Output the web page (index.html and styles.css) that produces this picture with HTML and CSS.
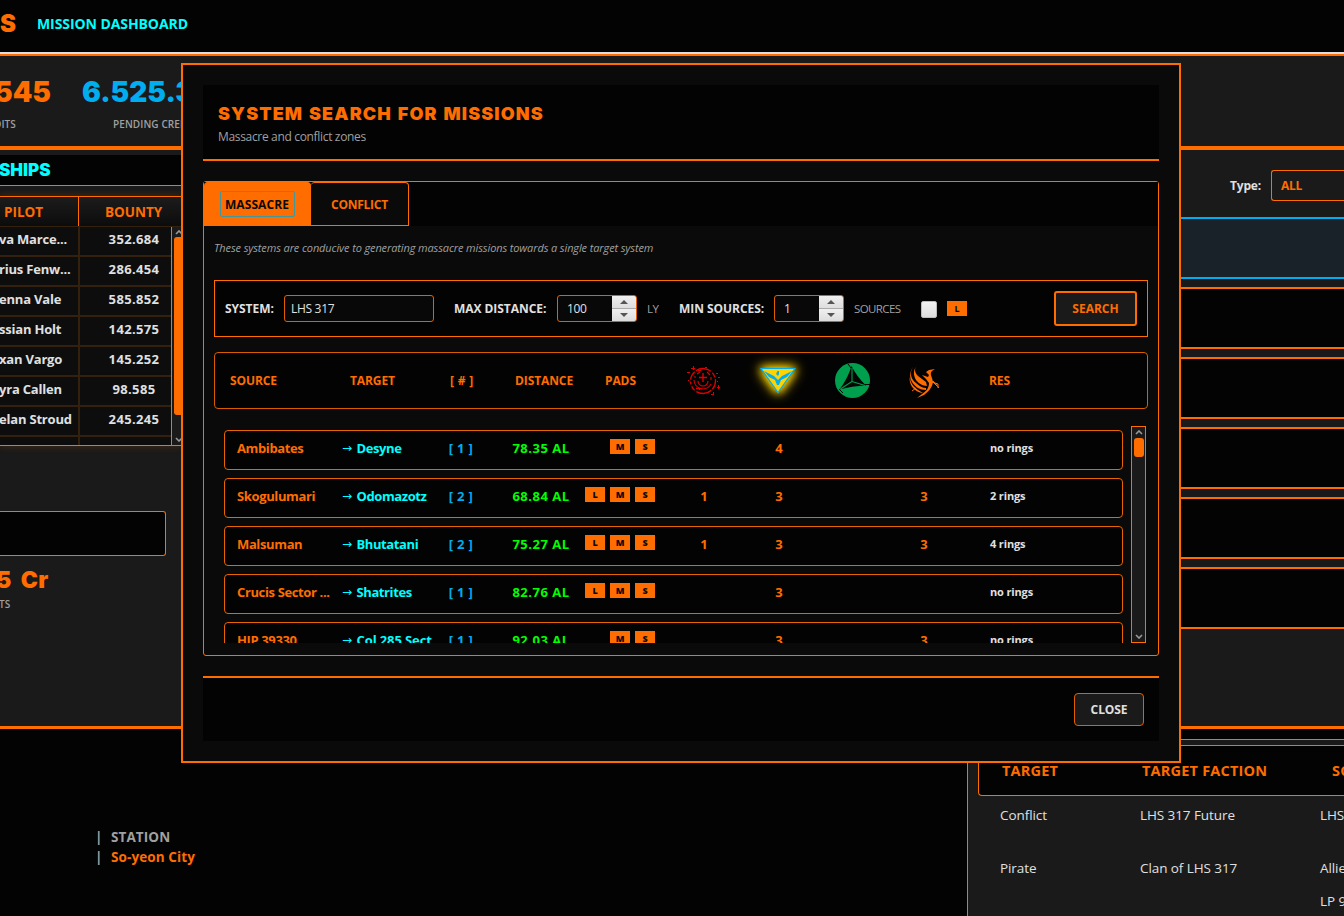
FILE: index.html
```html
<!DOCTYPE html>
<html lang="en">
<head>
<meta charset="utf-8">
<title>Mission Dashboard</title>
<link rel="stylesheet" href="styles.css">
</head>
<body>
<div class="app">
  <header class="topbar"><span class="brand">S</span><span class="page-name">MISSION DASHBOARD</span></header>
  <section class="stats">
    <div class="stat stat-a"><b class="big orange">545</b><span class="cap">DITS</span></div>
    <div class="stat stat-b"><b class="big blue">6.525.325</b><span class="cap">PENDING CREDITS</span></div>
  </section>
  <main class="middle">
    <section class="ships">
      <h2 class="ships-title">SHIPS</h2>
      <div class="ships-table">
        <div class="ships-head"><span class="c1">PILOT</span><span class="c2">BOUNTY</span></div>
        <div class="ships-body">
          <div class="ships-rows">
            <div class="ship"><span class="c1">va Marce...</span><span class="c2">352.684</span></div>
            <div class="ship"><span class="c1">rius Fenw...</span><span class="c2">286.454</span></div>
            <div class="ship"><span class="c1">enna Vale</span><span class="c2">585.852</span></div>
            <div class="ship"><span class="c1">ssian Holt</span><span class="c2">142.575</span></div>
            <div class="ship"><span class="c1">xan Vargo</span><span class="c2">145.252</span></div>
            <div class="ship"><span class="c1">yra Callen</span><span class="c2">98.585</span></div>
            <div class="ship"><span class="c1">elan Stroud</span><span class="c2">245.245</span></div>
            <div class="ship"><span class="c1"></span><span class="c2"></span></div>
          </div>
          <div class="ships-scroll">
            <svg class="chev" viewBox="0 0 8 5"><path d="M1 4 4 1 7 4"/></svg>
            <i class="ships-thumb"></i>
            <svg class="chev" viewBox="0 0 8 5"><path d="M1 1 4 4 7 1"/></svg>
          </div>
        </div>
      </div>
      <div class="blank-box"></div>
      <b class="credit">5 Cr</b>
      <span class="credit-cap">TS</span>
    </section>
    <section class="missions">
      <div class="type-row"><label>Type:</label><div class="select">ALL</div></div>
      <div class="card selected"></div>
      <div class="card"></div><div class="card"></div><div class="card"></div><div class="card"></div><div class="card"></div>
    </section>
  </main>
  <section class="bottom">
    <div class="station">
      <div class="st-line"><i>|</i><span class="gray">STATION</span></div>
      <div class="st-line"><i>|</i><span class="orange">So-yeon City</span></div>
    </div>
    <div class="factions">
      <div class="f-head"><span>TARGET</span><span>TARGET FACTION</span><span>SOURCE</span></div>
      <div class="f-row"><span>Conflict</span><span>LHS 317 Future</span><span>LHS 317</span></div>
      <div class="f-row"><span>Pirate</span><span>Clan of LHS 317</span><div class="f-src"><span>Allied</span><span>LP 91</span></div></div>
    </div>
  </section>
</div>

<div class="modal">
  <div class="m-head"><h1>SYSTEM SEARCH FOR MISSIONS</h1><p>Massacre and conflict zones</p></div>
  <div class="tabs-panel">
    <div class="tabs">
      <div class="tab active"><span class="focus">MASSACRE</span></div>
      <div class="tab"><span>CONFLICT</span></div>
    </div>
    <p class="desc">These systems are conducive to generating massacre missions towards a single target system</p>
    <div class="filters">
      <label class="l-sys">SYSTEM:</label><div class="input sys">LHS 317</div>
      <label class="l-max">MAX DISTANCE:</label>
      <div class="input spin s1"><span>100</span><div class="arrows"><i><svg viewBox="0 0 8 4"><path d="M0 4 4 0 8 4z"/></svg></i><i><svg viewBox="0 0 8 4"><path d="M0 0 4 4 8 0z"/></svg></i></div></div>
      <span class="unit u-ly">LY</span>
      <label class="l-min">MIN SOURCES:</label>
      <div class="input spin s2"><span>1</span><div class="arrows"><i><svg viewBox="0 0 8 4"><path d="M0 4 4 0 8 4z"/></svg></i><i><svg viewBox="0 0 8 4"><path d="M0 0 4 4 8 0z"/></svg></i></div></div>
      <span class="unit u-src">SOURCES</span>
      <i class="check"></i><b class="pad">L</b>
      <div class="btn-search">SEARCH</div>
    </div>
    <div class="cols">
      <span>SOURCE</span><span>TARGET</span><span class="h-num">[ # ]</span><span>DISTANCE</span><span>PADS</span>
      <div class="ico"><svg width="36" height="36" viewBox="0 0 36 36" fill="none" stroke="#e00000">
        <circle cx="18" cy="18" r="12.500" stroke-width="1.3" stroke-dasharray="9 1.5 16 2 5 2 3 2"/>
        <path stroke-width="1.1" d="M9 17a9 9 0 0 0 17 4M13 18a5 5 0 0 0 10 0M12 11l3-2M22 9l3 3M26 14v3M10 13v2"/>
        <path stroke-width="1.4" d="M18 10v9M14 14.500h8"/>
        <path shape-rendering="crispEdges" d="M8 3v4M6 5h4M13 7h3M20 4h2M2 9h3M3 17h1M11 25h3v2M31 10h2M33 14h2M32 24h3M33 22v4M28 29v3M26 31h2M32 18h1"/>
      </svg></div>
      <div class="ico"><svg class="tri" width="44" height="44" viewBox="0 0 44 44">
        <path fill="#ffd400" d="M5 9h34L22 34z"/>
        <path fill="none" stroke="#00aeef" stroke-width="1.2" d="M5 9.500h34L22 33.500z"/>
        <path fill="#00aeef" d="M8 12 18 17 22 21 26 17 36 12 31 18 25 21 23 26h-2l-2-5-6-3zM21.500 12h1.500v3l-1 2-2-2z"/>
      </svg></div>
      <div class="ico"><svg width="36" height="36" viewBox="0 0 36 36">
        <circle cx="18.500" cy="17.500" r="17.500" fill="#009f4d"/>
        <path fill="#050505" d="M17.500 3Q23 14 32 22.500Q18 23 5.500 26.500Q14 15 17.500 3z"/>
        <path fill="none" stroke="#050505" d="M14 1l3 4M29 21.500h7M5 26l4 4"/>
        <path fill="none" stroke="#009f4d" stroke-width="1.1" d="M18 5v13.500L6.500 26M18 18.500l13 4"/>
      </svg></div>
      <div class="ico"><svg width="32" height="36" viewBox="-1 0 32 36" fill="#ff6d00">
        <path d="M9 1C5 5 5 9 9 13l8 6 1 4c-4 0-9-3-11-6C4 12 4 6 9 1zM4 4c-4 6-2 12 3 16 3 3 7 5 10 5v2C11 27 6 24 3 19 0 14 1 8 4 4zM1 14c0 6 4 10 8 13l5 3c-5 0-10-4-12-8-1-3-2-5-1-8zM17 9l3-2 6-1-3 2c-2 2-1 4 0 7l1 4c-1 6-5 10-9 13l-7 3 5-4c5-3 7-7 7-11l-3-4-4-4 6 2 1-2z"/>
        <path fill="none" stroke="#ff6d00" d="M7 25l-4 3M23 18l5 5M23 19l6 2v4M24 18l6 7"/>
      </svg></div>
      <span></span><span>RES</span>
    </div>
    <div class="list">
      <div class="rows">
        <div class="row"><span class="src">Ambibates</span><span class="tgt"><em>→</em>Desyne</span><span class="num">[ 1 ]</span><span class="dist">78.35 AL</span><div class="pads"><b class="pad">M</b><b class="pad">S</b></div><span class="cnt"></span><span class="cnt">4</span><span class="cnt"></span><span class="cnt"></span><span></span><span class="res">no rings</span></div>
        <div class="row"><span class="src">Skogulumari</span><span class="tgt"><em>→</em>Odomazotz</span><span class="num">[ 2 ]</span><span class="dist">68.84 AL</span><div class="pads"><b class="pad">L</b><b class="pad">M</b><b class="pad">S</b></div><span class="cnt">1</span><span class="cnt">3</span><span class="cnt"></span><span class="cnt">3</span><span></span><span class="res">2 rings</span></div>
        <div class="row"><span class="src">Malsuman</span><span class="tgt"><em>→</em>Bhutatani</span><span class="num">[ 2 ]</span><span class="dist">75.27 AL</span><div class="pads"><b class="pad">L</b><b class="pad">M</b><b class="pad">S</b></div><span class="cnt">1</span><span class="cnt">3</span><span class="cnt"></span><span class="cnt">3</span><span></span><span class="res">4 rings</span></div>
        <div class="row"><span class="src">Crucis Sector ...</span><span class="tgt"><em>→</em>Shatrites</span><span class="num">[ 1 ]</span><span class="dist">82.76 AL</span><div class="pads"><b class="pad">L</b><b class="pad">M</b><b class="pad">S</b></div><span class="cnt"></span><span class="cnt">3</span><span class="cnt"></span><span class="cnt"></span><span></span><span class="res">no rings</span></div>
        <div class="row"><span class="src">HIP 39330</span><span class="tgt wide"><em>→</em>Col 285 Sect</span><span class="num">[ 1 ]</span><span class="dist">92.03 AL</span><div class="pads"><b class="pad">M</b><b class="pad">S</b></div><span class="cnt"></span><span class="cnt">3</span><span class="cnt"></span><span class="cnt">3</span><span></span><span class="res">no rings</span></div>
      </div>
      <div class="scroll">
        <svg class="chev" viewBox="0 0 8 5"><path d="M1 4 4 1 7 4"/></svg>
        <i class="thumb"></i>
        <svg class="chev" viewBox="0 0 8 5"><path d="M1 1 4 4 7 1"/></svg>
      </div>
    </div>
  </div>
  <div class="m-foot"><div class="btn-close">CLOSE</div></div>
</div>
</body>
</html>
```
FILE: styles.css
```css
* { box-sizing: border-box; }
html, body { margin: 0; width: 1344px; height: 916px; overflow: hidden; }
body { background: #030303; color: #e0e0e0; font-family: "Open Sans", "Noto Sans", sans-serif; font-size: 13px; line-height: 18px; white-space: nowrap; position: relative; }
h1, h2, p { margin: 0; }
i, em { font-style: normal; }
.orange { color: #ff6d00; }
.blue { color: #00aeef; }
.gray { color: #a0a0a0; }
.app { width: 1344px; height: 916px; display: flex; flex-direction: column; overflow: hidden; }

.topbar { height: 56px; flex: none; background: #030303; border-bottom: 2px solid #ff6d00; box-shadow: inset 0 -2px #ddd; display: flex; align-items: center; padding-bottom: 6px; }
.brand { width: 37px; font: 900 24px/30px Inter, sans-serif; color: #ff6d00; }
.page-name { color: #0ff; font-weight: 700; font-size: 14px; letter-spacing: -0.08px; }
.stats { height: 94px; flex: none; background: #1a1a1a; border-bottom: 4px solid #ff6d00; display: flex; padding-top: 18px; }
.stat { display: flex; flex-direction: column; }
.stat-a { width: 82px; }
.stat-b { width: 160px; }
.big { font: 900 28px/36px Inter, sans-serif; }
.stat-a .big { margin-left: -6px; }
.cap { font-size: 10px; line-height: 14px; margin-top: 7px; color: #a0a0a0; font-weight: 600; letter-spacing: 0.1px; }
.stat-a .cap { margin-left: -6px; }
.stat-b .cap { margin-left: 31px; }

.middle { height: 579px; flex: none; background: #1a1a1a; border-bottom: 3px solid #ff6d00; display: flex; justify-content: space-between; }
.ships { width: 182px; padding-top: 5px; display: flex; flex-direction: column; }
.ships-title { height: 31px; background: #030303; border-bottom: 1px solid #ff6d00; color: #0ff; font: 900 17px/30px Inter, sans-serif; margin-bottom: 10px; text-indent: -1px; }
.ships-table { border-top: 1px solid #ff6d00; border-bottom: 1px solid #ff6d00; height: 250px; box-shadow: 0 0 8px #ff6d0033; background: #0d0d0d; display: flex; flex-direction: column; overflow: hidden; flex: none; }
.ships-head { height: 30px; flex: none; display: flex; background: linear-gradient(#1c1c1c, #0c0c0c); color: #ff6d00; font-weight: 700; font-size: 13.500px; line-height: 31px; border-bottom: 1px solid #33200d; }
.ships-head .c1 { padding-left: 4px; border-right: 1px solid #ff6d00; width: 79px; }
.ships-head .c2 { padding-left: 26px; }
.ships-body { display: flex; flex: 1; min-height: 0; }
.ships-rows { width: 172px; border-right: 1px solid #ff6d00; overflow: hidden; }
.ship { height: 30px; display: flex; font-weight: 700; font-size: 13px; line-height: 25px; border-bottom: 2px solid #33200d; letter-spacing: -0.2px; }
.ship .c1 { width: 80px; border-right: 2px solid #33200d; overflow: hidden; text-indent: -1px; }
.ship .c2 { width: 91px; padding-left: 17px; text-align: center; letter-spacing: 0.35px; }
.ships-scroll { width: 10px; background: #1a1a1a; display: flex; flex-direction: column; padding: 3px 0 3px 2px; overflow: hidden; }
.ships-thumb { height: 178px; flex: none; background: #ff6d00; border-radius: 3px 0 0 3px; width: 12px; margin: 2px 0 auto; }
.chev { width: 8px; height: 5px; flex: none; fill: none; stroke: #999; stroke-width: 1.6; margin-left: 1px; }
.blank-box { height: 45px; width: 166px; margin-top: 65px; background: #030303; border: 1px solid #ff6d00; border-left: 0; border-radius: 0 3px 3px 0; flex: none; }
.credit { color: #ff6d00; font: 900 23px/30px Inter, sans-serif; margin-top: 9px; margin-left: -4px; word-spacing: 4px; letter-spacing: 0.4px; }
.credit-cap { font-size: 10px; line-height: 14px; margin-top: 2px; color: #a0a0a0; font-weight: 600; margin-left: -1px; }

.missions { width: 164px; padding-top: 20px; display: flex; flex-direction: column; gap: 8px; }
.type-row { display: flex; align-items: center; height: 31px; margin-bottom: 8px; padding-left: 50px; font-size: 12px; font-weight: 700; flex: none; }
.type-row label { width: 41px; letter-spacing: -0.2px; }
.select { height: 31px; flex: 1; border: 1px solid #ff6d00; border-right: 0; border-radius: 3px 0 0 3px; color: #ff6d00; padding-left: 9px; line-height: 29px; letter-spacing: -0.3px; }
.card { height: 62px; flex: none; background: #030303; border: solid #ff6d00; border-width: 2px 0; }
.card.selected { background: #182228; border-color: #00aeef; }

.bottom { flex: 1; display: flex; background: #030303; min-height: 0; }
.station { width: 967px; padding: 98px 0 0 95px; font-size: 13.500px; font-weight: 700; letter-spacing: 0.1px; }
.st-line { display: flex; height: 20px; line-height: 20px; }
.st-line i { width: 16px; color: #a0a0a0; }
.factions { width: 377px; margin-top: 10px; border: 1px solid #ff6d00; border-width: 1px 0 0 1px; background: #1a1a1a; padding: 5px 0 0 10px; overflow: hidden; }
.f-head { height: 51px; display: grid; grid-template-columns: 140px 190px 1fr; border: 1px solid #ff6d00; border-right: 0; border-radius: 0 0 0 4px; background: #030303; color: #ff6d00; font-size: 14.500px; font-weight: 700; line-height: 49px; padding-left: 23px; letter-spacing: 0.2px; }
.f-row { display: grid; grid-template-columns: 140px 180px 1fr; padding-left: 22px; height: 53px; line-height: 38px; font-size: 13.500px; letter-spacing: -0.08px; }
.f-src { display: flex; flex-direction: column; }
.f-src span + span { margin-top: -5px; }

.modal { position: absolute; left: 181px; top: 63px; width: 1000px; height: 700px; border: 2px solid #ff6d00; background: #0a0a0a; padding: 20px; display: flex; flex-direction: column; }
.m-head { height: 76px; flex: none; background: #030303; border-bottom: 2px solid #ff6d00; padding: 17px 15px 0; }
h1 { font: 900 18px/24px Inter, sans-serif; color: #ff6d00; letter-spacing: 1.1px; word-spacing: 1.2px; }
.m-head p { font-size: 12px; line-height: 16px; margin-top: 3px; color: #a0a0a0; letter-spacing: -0.33px; }
.tabs-panel { margin-top: 20px; height: 475px; flex: none; border: 1px solid #ff6d00; border-radius: 3px; display: flex; flex-direction: column; }
.tabs { height: 44px; flex: none; background: #030303; display: flex; }
.tab { width: 98px; border: 1px solid #ff6d00; border-left: 0; border-radius: 4px 4px 0 0; background: #0a0a0a; color: #ff6d00; font-size: 12px; font-weight: 700; display: flex; align-items: center; justify-content: center; letter-spacing: -0.25px; padding-top: 2px; }
.tab.active { width: 107px; background: #ff6d00; color: #0a0a0a; padding-top: 0; letter-spacing: 0.1px; }
.focus { border: 1px solid #3f98a0; border-radius: 2px; width: 75px; height: 26px; line-height: 26px; text-align: center; }
.desc { font-style: italic; font-size: 11px; line-height: 16px; color: #a0a0a0; margin: 14px 0 0 10px; letter-spacing: -0.12px; }
.filters { margin: 24px 10px 0; height: 57px; flex: none; border: 1px solid #ff6d00; background: #030303; display: flex; align-items: center; padding: 0 10px; font-size: 12px; }
.filters label { font-weight: 700; flex: none; letter-spacing: -0.05px; }
.l-sys { width: 59px; }
.l-max { width: 103px; }
.l-min { width: 95px; }
.input { height: 27px; flex: none; border: 1px solid #e06000; border-radius: 3px; background: #080808; line-height: 25px; padding-left: 6px; letter-spacing: -0.3px; }
.sys { width: 150px; margin-right: 20px; }
.spin { display: flex; justify-content: space-between; padding-left: 9px; }
.s1 { width: 80px; }
.s2 { width: 70px; }
.arrows { width: 24px; display: flex; flex-direction: column; gap: 1px; background: #aaa; border-radius: 0 2px 2px 0; overflow: hidden; }
.arrows i { flex: 1; background: linear-gradient(#f0f0f0, #ddd); display: flex; align-items: center; justify-content: center; }
.arrows svg { width: 8px; height: 4px; fill: #555; display: block; }
.unit { color: #a0a0a0; flex: none; letter-spacing: -0.6px; font-size: 11.500px; }
.u-ly { width: 42px; padding-left: 10px; }
.u-src { width: 77px; padding-left: 10px; }
.check { width: 16px; height: 17px; border-radius: 2px; border: 1px solid #bbb; background: linear-gradient(#f2f2f2, #ddd); margin-right: 10px; margin-top: 1px; flex: none; }
.pad { width: 20px; height: 15px; background: #ff6d00; color: #0a0a0a; font-size: 9px; line-height: 15px; text-align: center; flex: none; display: block; letter-spacing: 0; font-family: "Noto Sans", sans-serif; }
.btn-search { margin-left: auto; width: 83px; height: 35px; border: 2px solid #ff6d00; border-radius: 3px; background: #1a1a1a; color: #ff6d00; font-weight: 700; text-align: center; line-height: 31px; letter-spacing: 0; }
.cols { margin: 15px 10px 0; height: 57px; flex: none; border: 1px solid #d85c00; border-radius: 4px; background: #030303; display: grid; grid-template-columns: 120px 100px 65px 90px 50px 96px 54px 94px 50px 40px 1fr; align-items: center; padding-left: 15px; color: #ff6d00; font-size: 12px; font-weight: 700; letter-spacing: -0.1px; }
.h-num { letter-spacing: 0.3px; }
.ico { display: flex; justify-content: center; align-items: center; }
.ico svg { display: block; flex: none; }
.ico .tri { filter: drop-shadow(0 0 4px #ffd400) drop-shadow(0 0 6px #ffd400); }
.list { margin: 17px 12px 0 20px; height: 217px; flex: none; display: flex; gap: 8px; }
.rows { width: 899px; padding-top: 4px; overflow: hidden; display: flex; flex-direction: column; gap: 8px; }
.row { height: 40px; flex: none; border: 1px solid #e86400; border-radius: 4px; background: #030303; display: grid; grid-template-columns: 105px 90px 58px 95px 70px 98px 52px 94px 50px 41px 1fr; padding: 8px 0 0 12px; font-weight: 700; letter-spacing: -0.1px; }
.src, .cnt { color: #ff6d00; }
.src { letter-spacing: -0.37px; }
.tgt { color: #0ff; letter-spacing: -0.4px; display: flex; }
.tgt.wide { letter-spacing: -0.1px; }
.tgt em { flex: none; width: 14.500px; font: 400 12px/18px "DejaVu Sans", sans-serif; letter-spacing: 0; }
.num { color: #00aeef; text-align: center; letter-spacing: 0.3px; }
.dist { color: #0f0; text-align: center; padding-left: 7px; letter-spacing: 0.5px; }
.pads { display: flex; justify-content: flex-end; gap: 5px; }
.cnt { text-align: center; }
.res { font-size: 11px; letter-spacing: -0.15px; }
.scroll { width: 15px; border: 1px solid #ff6d00; background: #1a1a1a; display: flex; flex-direction: column; align-items: center; padding: 3px 0; }
.scroll .chev { margin: 0; }
.thumb { width: 10px; height: 19px; background: #ff6d00; border-radius: 3px; margin: 3px 0 auto; }
.m-foot { margin-top: 20px; height: 65px; flex: none; background: #030303; border-top: 2px solid #ff6d00; display: flex; justify-content: flex-end; padding: 15px 15px 0; }
.btn-close { width: 70px; height: 33px; border: 1px solid #e06000; border-radius: 4px; background: #1a1a1a; font-size: 12px; font-weight: 700; text-align: center; line-height: 31px; letter-spacing: -0.1px; }
```
